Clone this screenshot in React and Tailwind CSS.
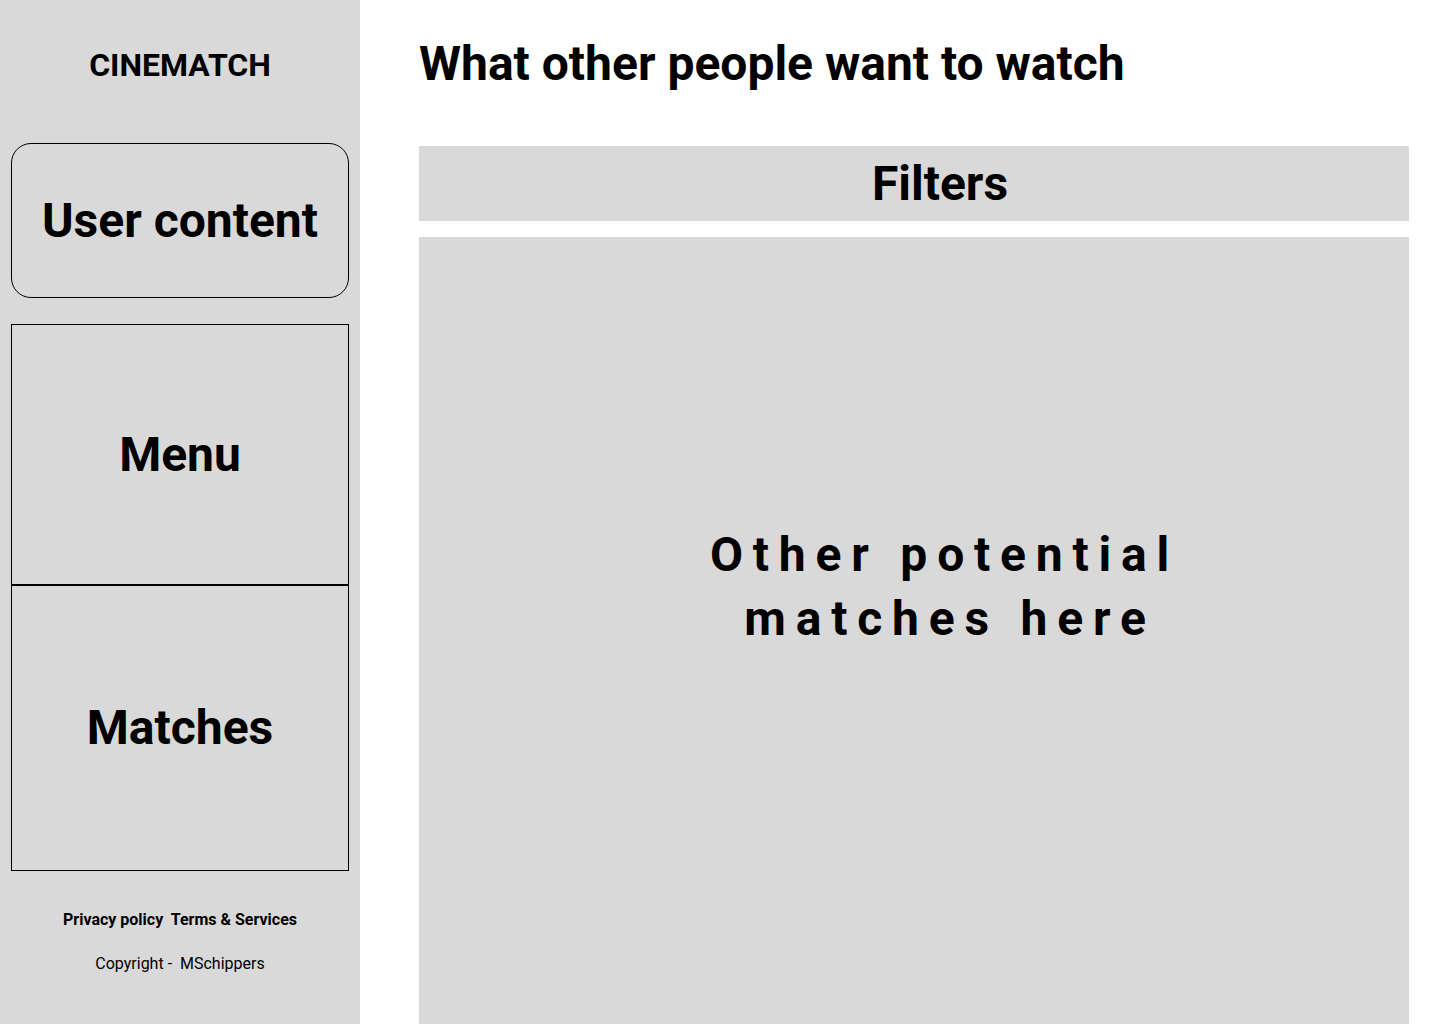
import React from "react";

export default function App() {
  return (
    <div className="flex h-screen overflow-hidden bg-white font-['Roboto',sans-serif] text-black">
      {/* Sidebar */}
      <aside className="w-[360px] shrink-0 bg-[#d9d9d9] flex flex-col px-[11px]">
        <div className="pt-[45px] h-[85px] text-center text-[32px] leading-[40px] font-bold">CINEMATCH</div>

        <div className="mt-[58px] h-[155px] rounded-[20px] border border-black flex items-center justify-center">
          <span className="text-[48px] leading-[56px] font-bold">User content</span>
        </div>

        <div className="mt-[26px] h-[261px] border border-black flex items-center justify-center">
          <span className="text-[48px] leading-[56px] font-bold">Menu</span>
        </div>
        <div className="h-[286px] border border-black flex items-center justify-center">
          <span className="text-[48px] leading-[56px] font-bold">Matches</span>
        </div>

        <div className="mt-[37px] text-center text-[16px] leading-[24px] font-bold">
          Privacy policy&nbsp; Terms &amp; Services
        </div>
        <div className="mt-[20px] text-center text-[16px] leading-[24px]">Copyright -&nbsp; MSchippers</div>
      </aside>

      {/* Main */}
      <main className="flex-1 flex flex-col pl-[59px] pr-[31px]">
        <h1 className="pt-[36px] text-[48px] leading-[56px] font-bold">What other people want to watch</h1>

        <div className="mt-[54px] h-[75px] bg-[#d9d9d9] flex items-center justify-center pl-[52px]">
          <span className="text-[48px] leading-[56px] font-bold">Filters</span>
        </div>

        <div className="mt-[16px] flex-1 bg-[#d9d9d9] pt-[286px] text-center text-[48px] leading-[64px] font-bold tracking-[9.8px]">
          <p className="pl-[61px]">Other potential</p>
          <p className="pl-[72px]">matches here</p>
        </div>
      </main>
    </div>
  );
}
